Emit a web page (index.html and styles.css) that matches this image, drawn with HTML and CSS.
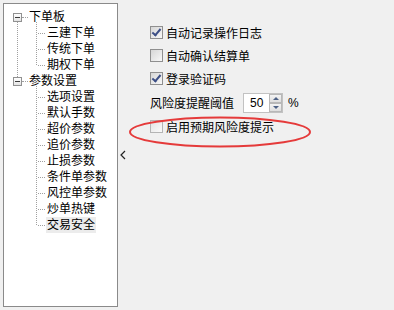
FILE: index.html
```html
<!DOCTYPE html>
<html lang="zh-CN">

<head>
    <meta charset="UTF-8">
    <title>参数设置</title>
    <link rel="stylesheet" href="styles.css">
</head>

<body>
    <div class="window">
        <div class="tree">
            <ul class="root">
                <li class="node">
                    <div class="row"><span class="toggle"></span><span class="stub"></span><span class="text">下单板</span></div>
                    <ul class="children">
                        <li><span class="text">三建下单</span></li>
                        <li><span class="text">传统下单</span></li>
                        <li><span class="text">期权下单</span></li>
                    </ul>
                </li>
                <li class="node">
                    <div class="row"><span class="toggle"></span><span class="stub"></span><span class="text">参数设置</span></div>
                    <ul class="children">
                        <li><span class="text">选项设置</span></li>
                        <li><span class="text">默认手数</span></li>
                        <li><span class="text">超价参数</span></li>
                        <li><span class="text">追价参数</span></li>
                        <li><span class="text">止损参数</span></li>
                        <li><span class="text">条件单参数</span></li>
                        <li><span class="text">风控单参数</span></li>
                        <li><span class="text">炒单热键</span></li>
                        <li><span class="text selected">交易安全</span></li>
                    </ul>
                </li>
            </ul>
        </div>

        <div class="splitter">
            <svg width="6" height="10" viewBox="0 0 6 10"><path d="M5 1 L1 5 L5 9" fill="none" stroke="#222" stroke-width="1.2"/></svg>
        </div>

        <div class="settings">
            <label class="check-row"><span class="checkbox checked"></span>自动记录操作日志</label>
            <label class="check-row"><span class="checkbox"></span>自动确认结算单</label>
            <label class="check-row"><span class="checkbox checked"></span>登录验证码</label>
            <div class="spin-row">
                <span>风险度提醒阈值</span>
                <div class="spinbox">
                    <span class="spin-value">50</span>
                    <div class="spin-buttons">
                        <span class="spin-btn up"></span>
                        <span class="spin-btn down"></span>
                    </div>
                </div>
                <span class="unit">%</span>
            </div>
            <label class="check-row"><span class="checkbox light"></span>启用预期风险度提示</label>
        </div>
    </div>

    <!-- red mark around the new option -->
    <svg class="mark" width="186" height="34" viewBox="0 0 186 34">
        <ellipse cx="93" cy="17" rx="90" ry="14.5" fill="none" stroke="#e53a3a" stroke-width="2"/>
    </svg>
</body>

</html>
```

FILE: styles.css
```css
body {
    margin: 0;
    background: #f0f0f0;
    font-family: "Liberation Sans", "Noto Sans CJK SC", sans-serif;
    font-size: 12px;
    color: #000;
    width: 394px;
    height: 310px;
    overflow: hidden;
    position: relative;
}

.window {
    display: flex;
    padding: 3px;
}

/* tree view */

.tree {
    width: 113px;
    height: 297px;
    border: 1px solid #8a8a8a;
    background: #fff;
    padding-top: 5px;
    box-sizing: content-box;
}

.tree ul {
    list-style: none;
    margin: 0;
    padding: 0;
}

.root > li {
    position: relative;
}

.root > li:first-child::after {
    content: "";
    position: absolute;
    left: 13px;
    top: 13px;
    bottom: -4px;
    border-left: 1px dotted #a0a0a0;
}

.row {
    height: 16px;
    display: flex;
    align-items: center;
    padding-left: 9px;
}

.toggle {
    width: 7px;
    height: 7px;
    border: 1px solid #919191;
    background: linear-gradient(#fff, #e4e4e4);
    position: relative;
}

.toggle::after {
    content: "";
    position: absolute;
    left: 1px;
    top: 3px;
    width: 5px;
    height: 1px;
    background: #3b3b3b;
}

.stub {
    width: 6px;
    border-top: 1px dotted #a0a0a0;
    margin-right: 1px;
}

.text {
    line-height: 16px;
    white-space: nowrap;
}

.children {
    position: relative;
}

.children::before {
    content: "";
    position: absolute;
    left: 32px;
    top: -3px;
    bottom: 8px;
    border-left: 1px dotted #a0a0a0;
}

.children li {
    height: 16px;
    display: flex;
    align-items: center;
    padding-left: 43px;
    position: relative;
}

.children li::before {
    content: "";
    position: absolute;
    left: 34px;
    top: 8px;
    width: 7px;
    border-top: 1px dotted #a0a0a0;
}

.selected {
    background: #ececec;
    padding: 0 1px;
    margin-left: -1px;
}

/* splitter arrow */

.splitter {
    width: 30px;
    padding-left: 2px;
    display: flex;
    align-items: center;
}

/* settings */

.settings {
    display: flex;
    flex-direction: column;
    padding-top: 18px;
}

.check-row {
    height: 23px;
    display: flex;
    align-items: center;
    white-space: nowrap;
}

.checkbox {
    width: 11px;
    height: 11px;
    border: 1px solid #8f8f8f;
    background: linear-gradient(135deg, #d6d6d6, #f8f8f8);
    margin-right: 3px;
    position: relative;
}

.checkbox.light {
    border-color: #b4b4b4;
    background: linear-gradient(135deg, #e2e2e2, #fafafa);
}

.checked::after {
    content: "";
    position: absolute;
    left: 3px;
    top: 0px;
    width: 3px;
    height: 7px;
    border-right: 2px solid #3d4f86;
    border-bottom: 2px solid #3d4f86;
    transform: rotate(40deg);
}

.spin-row {
    height: 25px;
    display: flex;
    align-items: center;
    white-space: nowrap;
}

.spinbox {
    display: flex;
    width: 38px;
    height: 18px;
    border: 1px solid #c2c2c2;
    background: #fff;
    margin-left: 9px;
}

.spin-value {
    flex: 1;
    line-height: 18px;
    padding-left: 6px;
}

.spin-buttons {
    width: 13px;
    display: flex;
    flex-direction: column;
}

.spin-btn {
    flex: 1;
    border: 1px solid #b8b8b8;
    background: linear-gradient(#f4f4f4, #dedede);
    position: relative;
}

.spin-btn::after {
    content: "";
    position: absolute;
    left: 3px;
    top: 2px;
    border-left: 3px solid transparent;
    border-right: 3px solid transparent;
}

.up::after {
    border-bottom: 3px solid #4d6185;
}

.down::after {
    border-top: 3px solid #4d6185;
}

.unit {
    margin-left: 5px;
}

/* annotation */

.mark {
    position: absolute;
    left: 127px;
    top: 115px;
}
```
